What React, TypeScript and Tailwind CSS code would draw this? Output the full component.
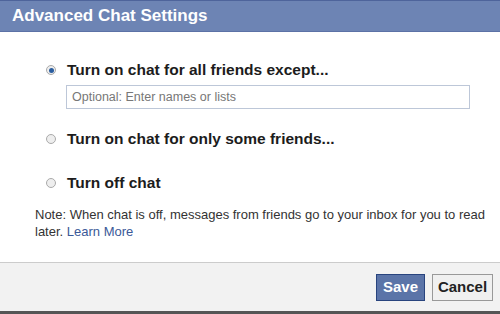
export default function App() {
  const options = [
    { label: "Turn on chat for all friends except...", checked: true },
    { label: "Turn on chat for only some friends...", checked: false },
    { label: "Turn off chat", checked: false },
  ];

  return (
    <div className="w-[500px] h-[314px] flex flex-col bg-white overflow-hidden font-['Liberation_Sans',Arial,sans-serif] text-[#222]">
      {/* header */}
      <div className="h-[32px] shrink-0 bg-[#6d84b4] border-t border-[#4e649b] border-b border-b-[#5c72a6] flex items-center px-[12px]">
        <h1 className="text-white font-bold text-[17px]">Advanced Chat Settings</h1>
      </div>

      {/* body */}
      <div className="flex-1 flex flex-col pl-[46px] pr-[30px] pt-[26px]">
        <label className="flex items-center gap-[11px] h-[24px]">
          <Radio checked={options[0].checked} />
          <span className="font-bold text-[15.5px] text-[#1c1c1c]">{options[0].label}</span>
        </label>
        <div className="ml-[20px] mt-[3px] h-[24px] border border-[#bdc7d8] flex items-center px-[5px] text-[12.5px] text-[#777]">
          Optional: Enter names or lists
        </div>
        <label className="flex items-center gap-[11px] h-[24px] mt-[18px]">
          <Radio checked={options[1].checked} />
          <span className="font-bold text-[15.5px] text-[#1c1c1c]">{options[1].label}</span>
        </label>
        <label className="flex items-center gap-[11px] h-[24px] mt-[20px]">
          <Radio checked={options[2].checked} />
          <span className="font-bold text-[15.5px] text-[#1c1c1c]">{options[2].label}</span>
        </label>
        <p className="-ml-[11px] -mr-[22px] mt-[11px] text-[13px] leading-[17px] text-[#333]">
          Note: When chat is off, messages from friends go to your inbox for you to read later.{" "}
          <span className="text-[#3b5998]">Learn More</span>
        </p>
      </div>

      {/* footer */}
      <div className="h-[49px] shrink-0 bg-[#f2f2f2] border-t border-[#ccc] flex items-center justify-end gap-[7px] px-[7px]">
        <button className="h-[27px] w-[49px] bg-[#5b74a8] border border-[#29447e] text-white font-bold text-[15px]">
          Save
        </button>
        <button className="h-[27px] w-[61px] bg-[#f0f0f0] border border-[#999] text-[#222] font-bold text-[15px]">
          Cancel
        </button>
      </div>
      <div className="h-[3px] shrink-0 bg-[#555]" />
    </div>
  );
}

function Radio({ checked }: { checked: boolean }) {
  return (
    <span className="w-[10px] h-[10px] rounded-full border border-[#aaa] bg-[#eee] flex items-center justify-center shrink-0">
      {checked && <span className="w-[5px] h-[5px] rounded-full bg-[#2a5d9f]" />}
    </span>
  );
}
